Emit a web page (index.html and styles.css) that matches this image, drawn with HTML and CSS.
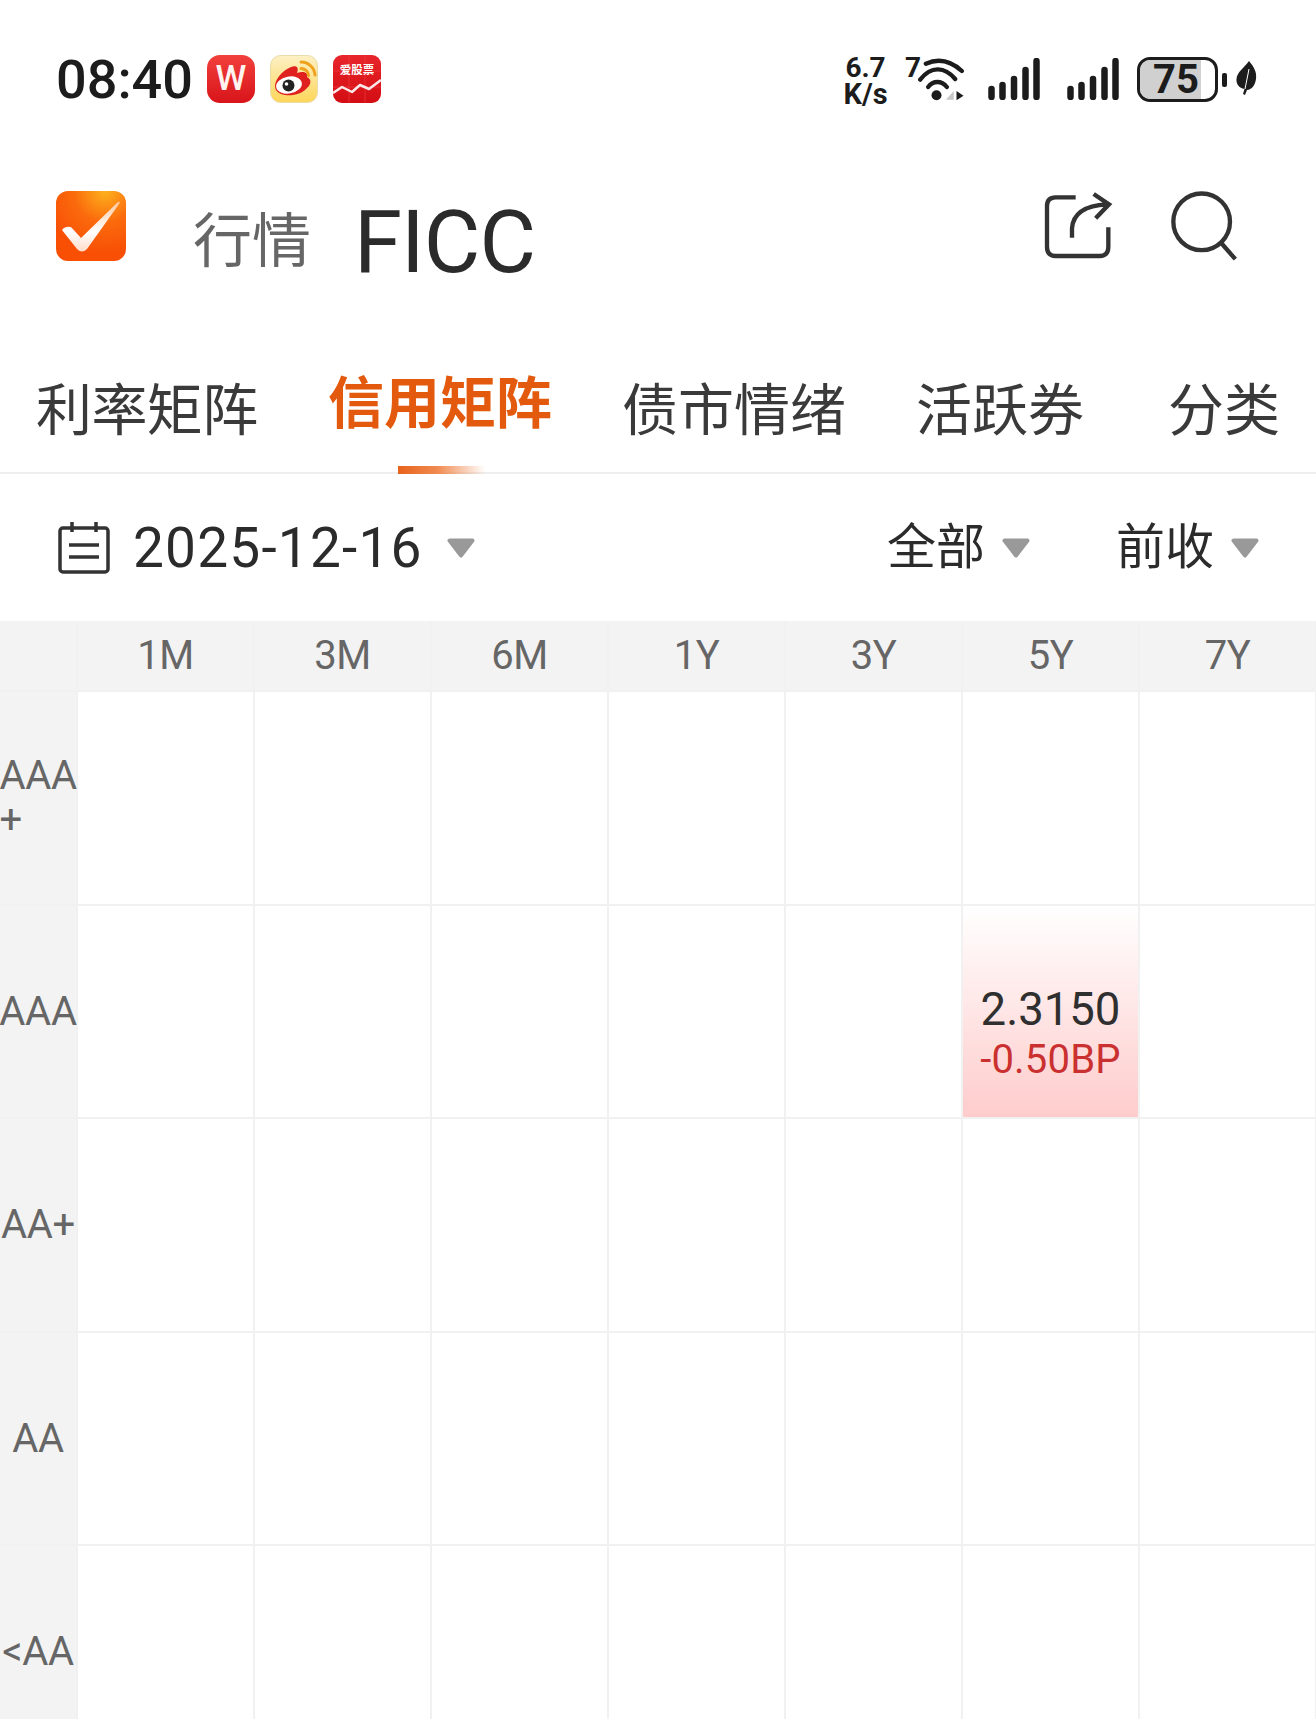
FILE: index.html
```html
<!DOCTYPE html>
<html lang="zh">
<head>
    <meta charset="UTF-8">
    <meta name="viewport" content="width=device-width, initial-scale=1.0">
    <title>FICC 信用矩阵</title>
    <link rel="stylesheet" href="styles.css">
</head>
<body>
<div class="page">
    <div class="statusBar">
        <div class="statusLeft">
            <span class="clock">08:40</span>
            <span class="appIcon appWps">W</span>
            <svg class="appIcon" viewBox="0 0 48 48">
                <defs>
                    <linearGradient id="wbBg" x1="0" y1="0" x2="0" y2="1">
                        <stop offset="0" stop-color="#fdf0c4"/>
                        <stop offset="1" stop-color="#fdd65a"/>
                    </linearGradient>
                </defs>
                <rect x="0.5" y="0.5" width="47" height="47" rx="10" fill="url(#wbBg)" stroke="#e8dca8"/>
                <path d="M31 7a14 14 0 0 1 14 13M31 13.500a7.500 7.500 0 0 1 7.500 7" fill="none" stroke="#efa21f" stroke-width="3" stroke-linecap="round"/>
                <path d="M5 31C5 24 13 15 21 12C27 10 29 13 27 18C33 16 38 17 37 22C42 24 41 30 37 33C32 39 23 41 15 40C9 39 5 36 5 31Z" fill="#e0201e"/>
                <ellipse cx="19" cy="30" rx="13" ry="8.500" fill="#fff" transform="rotate(-10 19 30)"/>
                <circle cx="18.500" cy="30.500" r="6" fill="#222"/>
                <circle cx="16.500" cy="29" r="1.800" fill="#fff"/>
            </svg>
            <svg class="appIcon" viewBox="0 0 48 48">
                <defs>
                    <linearGradient id="agBg" x1="0" y1="0" x2="0" y2="1">
                        <stop offset="0" stop-color="#e8252a"/>
                        <stop offset="1" stop-color="#d30d13"/>
                    </linearGradient>
                </defs>
                <rect width="48" height="48" rx="9" fill="url(#agBg)"/>
                <path d="M16 0V48M32 0V48M0 16H48M0 32H48" stroke="#f04a4c" stroke-width="0.500"/>
                <text x="24" y="19" class="agText" text-anchor="middle">爱股票</text>
                <path d="M0 38L9 32L19 37L27 30L36 34L48 25" fill="none" stroke="#fff" stroke-width="2.500" stroke-linejoin="round" opacity="0.900"/>
            </svg>
        </div>
        <div class="statusRight">
            <div class="netSpeed"><span>6.7</span><span class="netUnit">K/s</span></div>
            <span class="wifiNum">7</span>
            <svg class="wifi" viewBox="295 80 140 135">
                <path d="M318 100Q375 75 426 122M301 148C335 105 375 110 406 146M325 170C340 150 365 150 381 170" fill="none" stroke="#1c1c1c" stroke-width="13" stroke-linecap="round"/>
                <circle cx="350" cy="195" r="15" fill="#1c1c1c"/>
                <path d="M378 208L402 182V208Z" fill="#c8c8c8"/>
                <path d="M410 182L431 196L410 210Z" fill="#1c1c1c"/>
            </svg>
            <svg class="signal" viewBox="0 0 53 42">
                <path d="M3.500 31V39M14.500 27V39M26 21V39M37.500 12V39M48.500 3V39" stroke="#1c1c1c" stroke-width="6.500" stroke-linecap="round"/>
            </svg>
            <svg class="signal signalSecond" viewBox="0 0 53 42">
                <path d="M3.500 31V39M14.500 27V39M26 21V39M37.500 12V39M48.500 3V39" stroke="#1c1c1c" stroke-width="6.500" stroke-linecap="round"/>
            </svg>
            <div class="battery"><span class="batteryFill"></span><span class="batteryText">75</span></div>
            <span class="batteryNub"></span>
            <svg class="leaf" viewBox="0 0 21 34">
                <path d="M13 0C18 6 21 11 20 18C19 25 15 29 11 29L9 34L7 33L8.500 28C3 27 0 23 0.500 18C1 11 8 7 13 0Z" fill="#1c1c1c"/>
                <path d="M13 8L9 28" stroke="#fff" stroke-width="1"/>
            </svg>
        </div>
    </div>

    <div class="header">
        <svg class="logo" viewBox="0 0 70 70">
            <defs>
                <radialGradient id="logoBg" cx="0.700" cy="0" r="0.900">
                    <stop offset="0" stop-color="#fdb21e"/>
                    <stop offset="0.500" stop-color="#fb6a0c"/>
                    <stop offset="1" stop-color="#f84f05"/>
                </radialGradient>
                <linearGradient id="logoCheck" x1="0" y1="0" x2="0" y2="1">
                    <stop offset="0" stop-color="#ffc9a0"/>
                    <stop offset="0.600" stop-color="#fff"/>
                    <stop offset="1" stop-color="#ffdcc8"/>
                </linearGradient>
            </defs>
            <rect width="70" height="70" rx="12" fill="url(#logoBg)"/>
            <path d="M6 39Q9 35 15 36L25 47L62 11Q65 10 63 13L31 58Q26 63 21 58Z" fill="url(#logoCheck)"/>
        </svg>
        <span class="crumb">行情</span>
        <span class="pageTitle">FICC</span>
        <div class="headerTools">
            <svg class="toolShare" viewBox="70 60 210 210">
                <path d="M168 82H108Q82 82 82 108V230Q82 258 108 258H240Q266 258 266 230V172" fill="none" stroke="#333" stroke-width="13"/>
                <path d="M157 203V175Q162 108 262 103M222 72L268 103L228 145" fill="none" stroke="#333" stroke-width="13"/>
            </svg>
            <svg class="toolSearch" viewBox="450 55 210 215">
                <circle cx="545" cy="150" r="85" fill="none" stroke="#333" stroke-width="13"/>
                <path d="M605 215L646 262" stroke="#333" stroke-width="13"/>
            </svg>
        </div>
    </div>

    <div class="tabs">
        <div class="tab tabFirst">利率矩阵</div>
        <div class="tab tabActive">信用矩阵<span class="tabLine"></span></div>
        <div class="tab">债市情绪</div>
        <div class="tab">活跃券</div>
        <div class="tab tabLast">分类</div>
    </div>

    <div class="filters">
        <svg class="calendar" viewBox="0 0 52 52">
            <rect x="2" y="6" width="48" height="44" rx="3" fill="none" stroke="#333" stroke-width="3.500"/>
            <path d="M14 0V10M38 0V10M11 23H41M11 35H41" stroke="#333" stroke-width="3.500"/>
        </svg>
        <span class="dateText">2025-12-16</span>
        <svg class="caret caretDate" viewBox="0 0 28 20"><path d="M2.500 2.500H25.500L14 17.500Z" fill="#999" stroke="#999" stroke-width="4" stroke-linejoin="round"/></svg>
        <span class="filterText filterAll">全部</span>
        <svg class="caret" viewBox="0 0 28 20"><path d="M2.500 2.500H25.500L14 17.500Z" fill="#999" stroke="#999" stroke-width="4" stroke-linejoin="round"/></svg>
        <span class="filterText filterPrev">前收</span>
        <svg class="caret" viewBox="0 0 28 20"><path d="M2.500 2.500H25.500L14 17.500Z" fill="#999" stroke="#999" stroke-width="4" stroke-linejoin="round"/></svg>
    </div>

    <div class="matrix">
        <div class="cell headCell"></div>
        <div class="cell headCell">1M</div>
        <div class="cell headCell">3M</div>
        <div class="cell headCell">6M</div>
        <div class="cell headCell">1Y</div>
        <div class="cell headCell">3Y</div>
        <div class="cell headCell">5Y</div>
        <div class="cell headCell">7Y</div>

        <div class="cell rowCell"><span class="rowWrap">AAA<br>+</span></div>
        <div class="cell"></div><div class="cell"></div><div class="cell"></div><div class="cell"></div><div class="cell"></div><div class="cell"></div><div class="cell"></div>

        <div class="cell rowCell">AAA</div>
        <div class="cell"></div><div class="cell"></div><div class="cell"></div><div class="cell"></div><div class="cell"></div>
        <div class="cell hotCell"><span class="yieldVal">2.3150</span><span class="yieldChg">-0.50BP</span></div>
        <div class="cell"></div>

        <div class="cell rowCell">AA+</div>
        <div class="cell"></div><div class="cell"></div><div class="cell"></div><div class="cell"></div><div class="cell"></div><div class="cell"></div><div class="cell"></div>

        <div class="cell rowCell">AA</div>
        <div class="cell"></div><div class="cell"></div><div class="cell"></div><div class="cell"></div><div class="cell"></div><div class="cell"></div><div class="cell"></div>

        <div class="cell rowCell">&lt;AA</div>
        <div class="cell"></div><div class="cell"></div><div class="cell"></div><div class="cell"></div><div class="cell"></div><div class="cell"></div><div class="cell"></div>
    </div>
</div>
</body>
</html>
```

FILE: styles.css
```css
html, body {
    margin: 0;
    padding: 0;
    background: #fff;
}

.page {
    width: 1316px;
    height: 1719px;
    overflow: hidden;
    font-family: Roboto, "Noto Sans CJK SC", sans-serif;
    color: #2b2b2b;
}

/* status bar */
.statusBar {
    height: 159px;
    box-sizing: border-box;
    padding: 55px 59px 0 56px;
    display: flex;
    justify-content: space-between;
    align-items: flex-start;
}

.statusLeft {
    display: flex;
    align-items: center;
    height: 48px;
}

.clock {
    font-size: 54px;
    font-weight: 500;
    width: 151px;
    color: #1c1c1c;
}

.appIcon {
    width: 48px;
    height: 48px;
    margin-right: 15px;
    flex: none;
}

.appWps {
    box-sizing: border-box;
    border-radius: 13px;
    background: linear-gradient(#f2403c, #d8141a);
    color: #fff3ef;
    font-size: 35px;
    font-weight: 500;
    line-height: 48px;
    text-align: center;
}

.agText {
    font-family: "Noto Sans CJK SC", sans-serif;
    font-size: 11.500px;
    font-weight: 700;
    fill: #fff;
}

.statusRight {
    display: flex;
    align-items: flex-start;
    color: #1c1c1c;
}

.netSpeed {
    display: flex;
    flex-direction: column;
    align-items: center;
    width: 43px;
    font-size: 28px;
    font-weight: 700;
    line-height: 26px;
}

.netUnit {
    font-size: 29px;
}

.wifiNum {
    font-size: 28px;
    font-weight: 700;
    line-height: 26px;
    margin-left: 18px;
    width: 13px;
}

.wifi {
    width: 47px;
    height: 45px;
    margin-top: 2px;
}

.signal {
    width: 53px;
    height: 42px;
    margin: 3px 0 0 23px;
}

.signalSecond {
    margin-left: 26px;
}

.battery {
    position: relative;
    width: 81px;
    height: 45px;
    box-sizing: border-box;
    margin: 2px 0 0 17px;
    border: 3px solid #1c1c1c;
    border-radius: 13px;
    overflow: hidden;
    text-align: center;
}

.batteryFill {
    position: absolute;
    left: 0;
    top: 0;
    bottom: 0;
    width: 61px;
    background: #d0d0d0;
}

.batteryText {
    position: relative;
    font-size: 40px;
    font-weight: 700;
    line-height: 39px;
    display: block;
    padding-right: 3px;
}

.batteryNub {
    width: 5px;
    height: 14px;
    margin: 18px 0 0 4px;
    border-radius: 2px;
    background: #1c1c1c;
}

.leaf {
    width: 21px;
    height: 34px;
    margin: 6px 0 0 9px;
}

/* header */
.header {
    height: 190px;
    position: relative;
    display: flex;
    align-items: flex-start;
    padding-left: 56px;
}

.logo {
    width: 70px;
    height: 70px;
    margin-top: 32px;
    flex: none;
}

.crumb {
    font-size: 59px;
    line-height: 72px;
    margin: 47px 0 0 67px;
    color: #666;
}

.pageTitle {
    font-size: 87px;
    line-height: 100px;
    letter-spacing: -1px;
    margin: 33px 0 0 43px;
    color: #2b2b2b;
}

.headerTools {
    margin: 31px 0 0 auto;
    padding-right: 76px;
    display: flex;
    gap: 57px;
}

.toolShare {
    width: 70px;
    height: 70px;
}

.toolSearch {
    width: 70px;
    height: 72px;
}

/* tabs */
.tabs {
    height: 125px;
    box-sizing: border-box;
    border-bottom: 2px solid #eee;
    padding: 22px 0 0 34px;
    display: flex;
    gap: 70px;
    font-size: 56px;
    line-height: 80px;
    color: #3a3a3a;
}

.tab {
    position: relative;
}

.tabFirst {
    margin-left: 2px;
    margin-right: -2px;
    width: 224px;
    white-space: nowrap;
    letter-spacing: -0.600px;
}

.tabActive {
    height: 108px;
    margin-top: -7px;
    font-weight: 700;
    color: #e35a0e;
}

.tabLine {
    position: absolute;
    left: 70px;
    bottom: -2px;
    width: 87px;
    height: 8px;
    background: linear-gradient(90deg, #e8631c, #f08a50 45%, rgba(240, 138, 80, 0));
}

.tabLast {
    margin-left: 14px;
}

/* date and filters */
.filters {
    height: 147px;
    box-sizing: border-box;
    padding: 0 57px 0 58px;
    display: flex;
    align-items: center;
}

.calendar {
    width: 52px;
    height: 52px;
    flex: none;
}

.dateText {
    font-size: 55px;
    letter-spacing: 1.200px;
    margin-left: 23px;
    color: #2b2b2b;
}

.caret {
    width: 28px;
    height: 20px;
    flex: none;
}

.caretDate {
    margin-left: 24px;
}

.filterText {
    font-size: 49px;
    margin: 0 17px 10px 0;
    color: #2b2b2b;
}

.filterAll {
    margin-left: auto;
}

.filterPrev {
    margin-left: 86px;
}

/* matrix */
.matrix {
    display: grid;
    grid-template-columns: 78px repeat(7, 177px);
    grid-template-rows: 71px repeat(5, 213.500px);
}

.cell {
    box-sizing: border-box;
    border-right: 2px solid #f1f1f1;
    border-bottom: 2px solid #f1f1f1;
    display: flex;
    flex-direction: column;
    align-items: center;
    justify-content: center;
    font-size: 40px;
    color: #666;
}

.headCell,
.rowCell {
    background: #f3f3f3;
}

.headCell {
    letter-spacing: -0.500px;
}

.rowCell {
    white-space: nowrap;
    letter-spacing: -0.300px;
}

.rowWrap {
    width: 77px;
    line-height: 44px;
}

.hotCell {
    background: linear-gradient(#fff, #ffcccc);
    padding-top: 41px;
}

.yieldVal {
    font-size: 45.500px;
    line-height: 56px;
    color: #2f2f2f;
}

.yieldChg {
    font-size: 40px;
    line-height: 44px;
    letter-spacing: 0.200px;
    color: #c9302f;
}
```
